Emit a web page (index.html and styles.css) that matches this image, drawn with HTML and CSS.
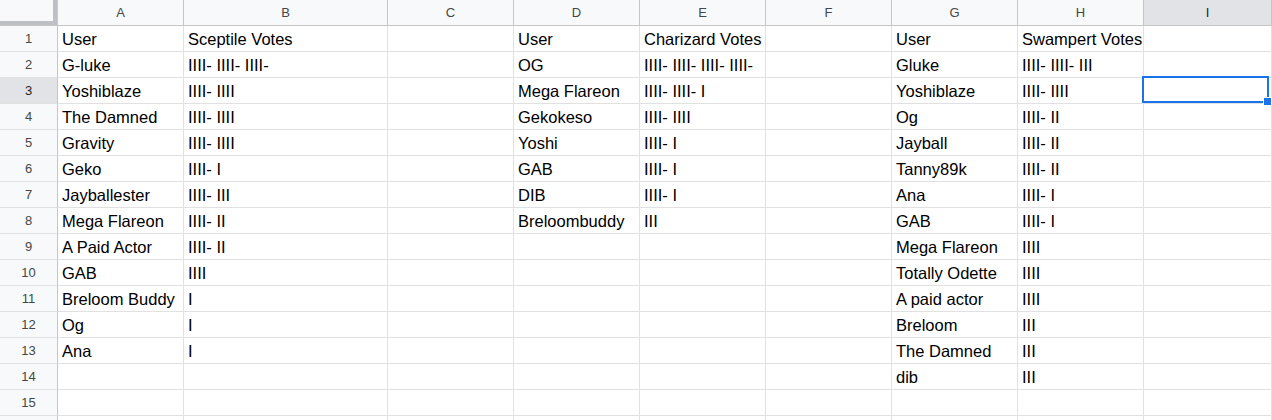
FILE: index.html
```html
<!DOCTYPE html>
<html lang="en">
<head>
    <meta charset="UTF-8">
    <title>Votes - Sheet1</title>
    <link rel="stylesheet" href="styles.css">
</head>
<body>
    <div class="sheet" id="sheet">
        <div class="corner"></div>
        <div class="col-head">A</div>
        <div class="col-head">B</div>
        <div class="col-head">C</div>
        <div class="col-head">D</div>
        <div class="col-head">E</div>
        <div class="col-head">F</div>
        <div class="col-head">G</div>
        <div class="col-head">H</div>
        <div class="col-head active">I</div>
    </div>

    <script>
        // cell contents, one array per row: A..I
        const rows = [
            ['User', 'Sceptile Votes', '', 'User', 'Charizard Votes', '', 'User', 'Swampert Votes', ''],
            ['G-luke', 'IIII- IIII- IIII-', '', 'OG', 'IIII- IIII- IIII- IIII-', '', 'Gluke', 'IIII- IIII- III', ''],
            ['Yoshiblaze', 'IIII- IIII', '', 'Mega Flareon', 'IIII- IIII- I', '', 'Yoshiblaze', 'IIII- IIII', ''],
            ['The Damned', 'IIII- IIII', '', 'Gekokeso', 'IIII- IIII', '', 'Og', 'IIII- II', ''],
            ['Gravity', 'IIII- IIII', '', 'Yoshi', 'IIII- I', '', 'Jayball', 'IIII- II', ''],
            ['Geko', 'IIII- I', '', 'GAB', 'IIII- I', '', 'Tanny89k', 'IIII- II', ''],
            ['Jayballester', 'IIII- III', '', 'DIB', 'IIII- I', '', 'Ana', 'IIII- I', ''],
            ['Mega Flareon', 'IIII- II', '', 'Breloombuddy', 'III', '', 'GAB', 'IIII- I', ''],
            ['A Paid Actor', 'IIII- II', '', '', '', '', 'Mega Flareon', 'IIII', ''],
            ['GAB', 'IIII', '', '', '', '', 'Totally Odette', 'IIII', ''],
            ['Breloom Buddy', 'I', '', '', '', '', 'A paid actor', 'IIII', ''],
            ['Og', 'I', '', '', '', '', 'Breloom', 'III', ''],
            ['Ana', 'I', '', '', '', '', 'The Damned', 'III', ''],
            ['', '', '', '', '', '', 'dib', 'III', ''],
            ['', '', '', '', '', '', '', '', '']
        ];

        const sheet = document.getElementById('sheet');
        rows.forEach((row, r) => {
            const num = document.createElement('div');
            num.className = 'row-head' + (r === 2 ? ' active' : '');
            num.textContent = r + 1;
            sheet.appendChild(num);

            row.forEach((value, c) => {
                const cell = document.createElement('div');
                cell.className = 'cell';
                cell.textContent = value;
                if (r === 2 && c === 8) {
                    const sel = document.createElement('div');
                    sel.className = 'selection';
                    sel.innerHTML = '<span class="handle"></span>';
                    cell.appendChild(sel);
                }
                sheet.appendChild(cell);
            });
        });

        // top sliver of row 16, cut by the window edge
        for (let c = 0; c < 10; c++) {
            const cell = document.createElement('div');
            cell.className = c === 0 ? 'row-head' : 'cell';
            sheet.appendChild(cell);
        }
    </script>
</body>
</html>
```

FILE: styles.css
```css
html, body { margin: 0; padding: 0; background: #fff; overflow: hidden; }
body { font-family: "Liberation Sans", Arial, sans-serif; width: 1272px; height: 420px; }

.sheet {
    display: grid;
    grid-template-columns: 58px 126px 204px 126px 126px 126px 126px 126px 126px 128px;
    grid-auto-rows: 26px;
}

.corner {
    background: #f8f9fa;
    border-right: 1px solid #c4c7c5;
    border-bottom: 1px solid #c4c7c5;
    box-sizing: border-box;
    position: relative;
}
.corner::after {
    content: "";
    position: absolute;
    right: 0; bottom: 0;
    width: 100%; height: 100%;
    border-right: 4px solid #bdc1c6;
    border-bottom: 4px solid #bdc1c6;
    box-sizing: border-box;
}

.col-head {
    background: #f8f9fa;
    border-right: 1px solid #c4c7c5;
    border-bottom: 1px solid #c4c7c5;
    box-sizing: border-box;
    color: #444746;
    font-size: 13px;
    line-height: 25px;
    text-align: center;
}

.row-head {
    background: #f8f9fa;
    border-right: 1px solid #c4c7c5;
    border-bottom: 1px solid #e1e1e1;
    box-sizing: border-box;
    color: #444746;
    font-size: 13px;
    line-height: 25px;
    text-align: center;
}

.col-head.active, .row-head.active { background: #e1e3e6; color: #1f1f1f; }

.cell {
    border-right: 1px solid #e1e1e1;
    border-bottom: 1px solid #e1e1e1;
    box-sizing: border-box;
    color: #000;
    font-size: 16.5px;
    line-height: 25px;
    padding: 1px 0 0 4px;
    white-space: nowrap;
    position: relative;
}

.selection {
    position: absolute;
    left: -2px; top: -2px;
    width: 127px; height: 27px;
    border: 2px solid #1a73e8;
    box-sizing: border-box;
}
.handle {
    position: absolute;
    right: -5px; bottom: -5px;
    width: 7px; height: 7px;
    background: #1a73e8;
    border: 1px solid #fff;
}
```
